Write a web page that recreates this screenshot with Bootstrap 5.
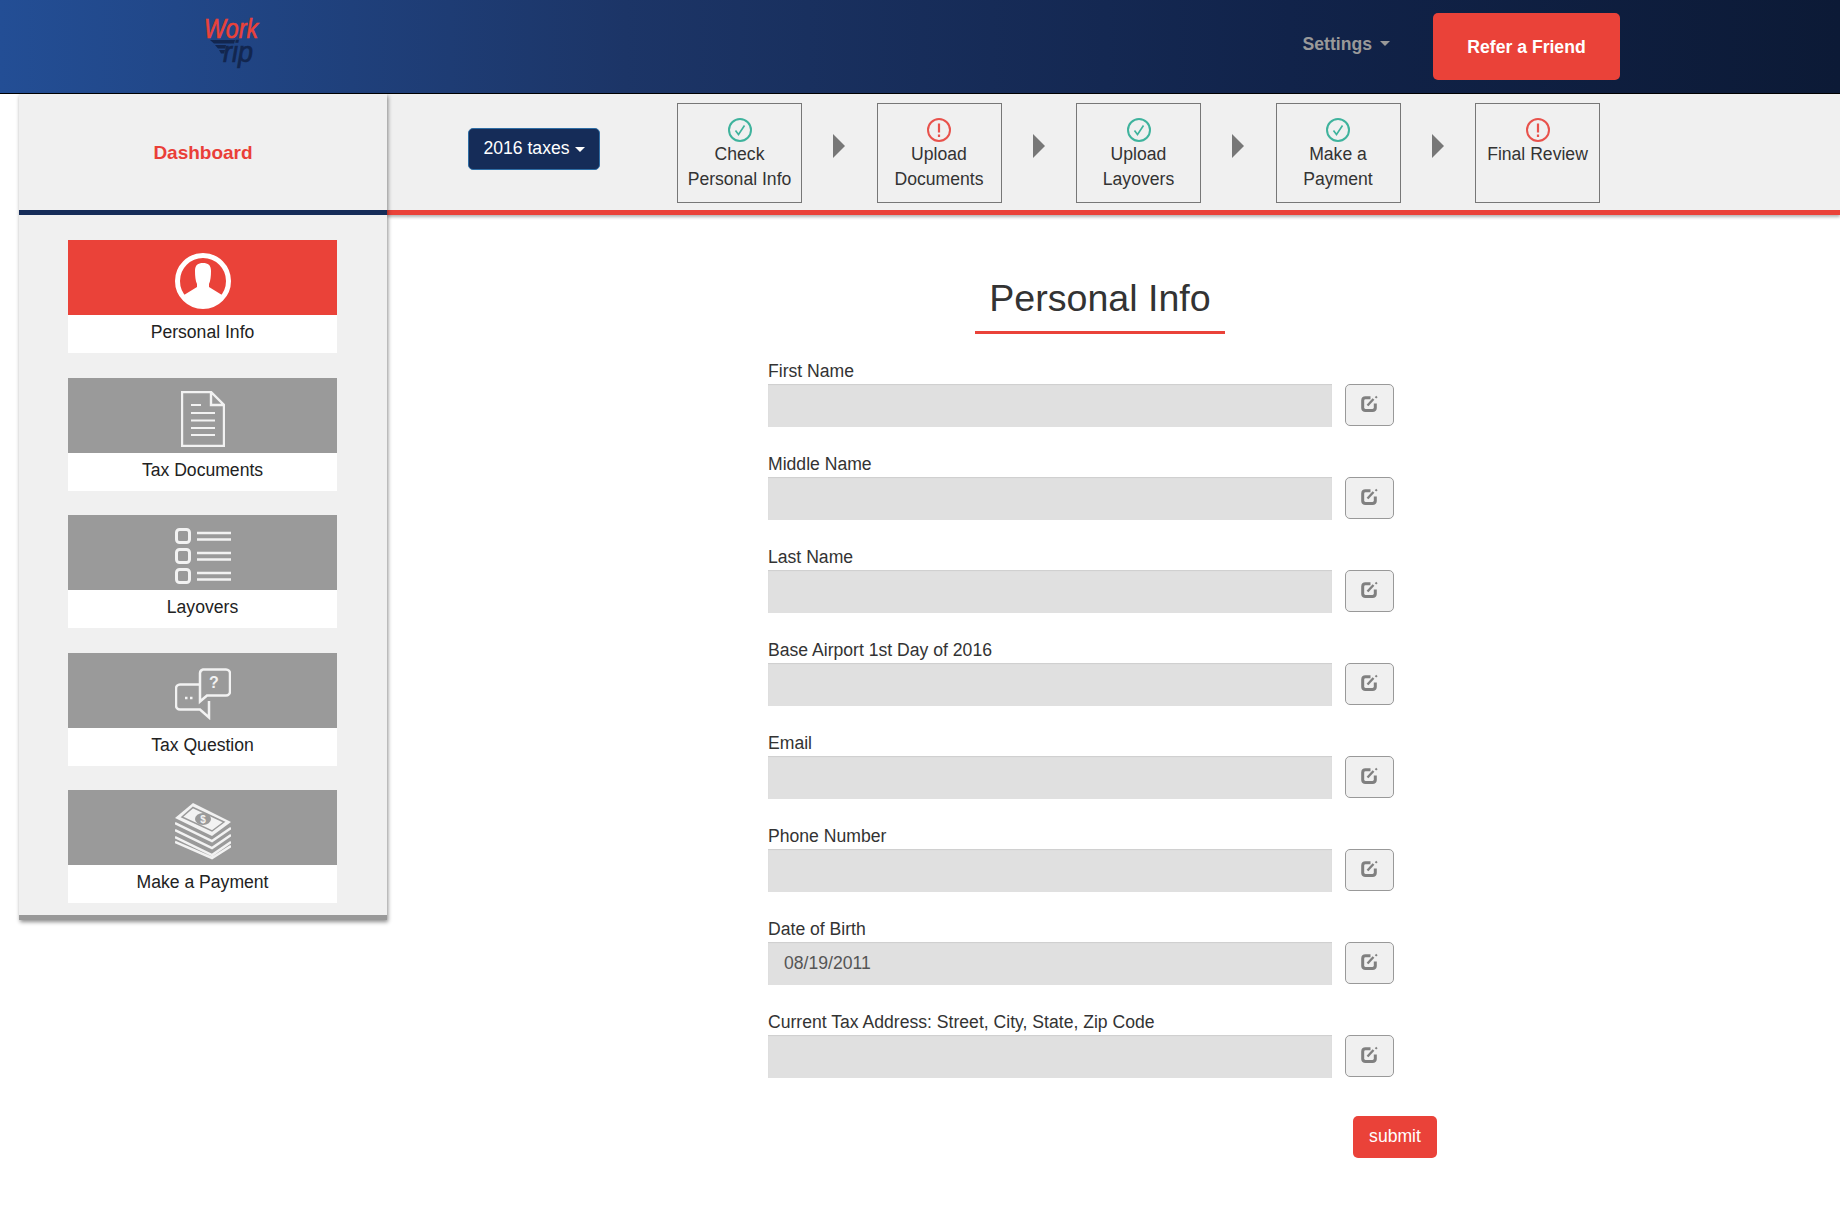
<!DOCTYPE html>
<html lang="en">
<head>
  <meta charset="UTF-8">
  <title>Work Trip - Personal Info</title>
  <link href="https://cdn.jsdelivr.net/npm/bootstrap@5.3.2/dist/css/bootstrap.min.css" rel="stylesheet">
  <style>
    body { font-family: "Liberation Sans", Arial, sans-serif; font-size: 17.6px; line-height: 25px; color: #333; background: #fff; }
    .top-bar { height: 94px; padding: 0; border-bottom: 1px solid #000; background: linear-gradient(90deg, #234e95 0%, #1c3567 34%, #11234a 70%, #0c1a36 100%); }
    .logo-wrap { margin-left: 204px; margin-top: -5px; }
    .logo-wrap svg { overflow: visible; }
    .settings-link { color: #999; font-weight: 700; font-size: 17.6px; padding: 0; margin-right: 43px; margin-top: -4px; }
    .settings-link:hover { color: #999; }
    .settings-link::after { margin-left: 8px; }
    .refer-btn { width: 187px; height: 67px; margin-right: 220px; background: #ea4239; border: 0; border-radius: 5px; color: #fff; font-weight: 700; font-size: 17.6px; padding-top: 8px; }
    .side-panel { width: 368px; margin-left: 19px; flex: none; background: #f0f0f0; border-bottom: 5px solid #999; box-shadow: 1px 2px 4px rgba(0,0,0,.45); position: relative; z-index: 2; height: 826px; }
    .side-head { height: 121px; border-bottom: 5px solid #152c58; color: #ea3f38; font-weight: 700; font-size: 19px; }
    .side-items { padding: 25px 50px 0 49px; }
    .side-item { display: block; height: 113px; margin-bottom: 24.5px; background: #fff; color: #222; text-align: center; text-decoration: none; }
    .side-icon { height: 75px; padding-top: 7px; background: #9a9a9a; }
    .side-item.is-active .side-icon { background: #ea4239; }
    .side-label { height: 38px; line-height: 34px; }
    .step-bar { height: 121px; background: #f0f0f0; border-bottom: 5px solid #ea4239; padding: 9px 0 0 81px; box-shadow: 0 2px 3px rgba(0,0,0,.3); }
    .year-btn { width: 132px; height: 42px; margin-top: 25px; margin-right: 77px; padding: 5px 0 7px; background: #152c58; border: 1px solid #2e6da4; border-radius: 5px; color: #fff; font-size: 17.6px; line-height: 25px; }
    .year-btn:hover { background: #152c58; color: #fff; }
    .year-btn::after { vertical-align: .1em; margin-left: 5px; }
    .step-box { width: 125px; height: 100px; border: 1px solid #777; padding-top: 13px; text-align: center; color: #333; line-height: 25px; }
    .step-box svg { display: block; margin: 1px auto 0; }
    .step-arrow { width: 0; height: 0; margin: 31px 31.5px 0 31px; border-left: 12px solid #777; border-top: 12px solid transparent; border-bottom: 12px solid transparent; }
    .form-area { width: 669px; margin-left: 381px; padding-top: 61px; }
    .page-title { width: 250px; margin: 0 0 25px 207px; padding-bottom: 10px; border-bottom: 3px solid #ea4239; font-size: 37.6px; line-height: 45px; color: #333; font-weight: 400; white-space: nowrap; display: flex; justify-content: center; }
    .field-row { margin-bottom: 25px; }
    .field-label { display: block; height: 25px; margin: 0; color: #333; }
    .field-input { width: 564px; height: 43px; flex: none; padding: 0 16px; background: #e0e0e0; border: 0; border-radius: 0; box-shadow: inset 0 1px 1px rgba(0,0,0,.08); color: #555; font-size: 17.6px; }
    .field-input:focus { background: #e0e0e0; color: #555; }
    .edit-btn { width: 49px; height: 42px; margin-left: 13px; padding: 0 0 5px; background: #f0f0f0; border: 1px solid #999; border-radius: 5px; }
    .submit-btn { width: 84px; height: 42px; margin-top: 13px; padding: 0 0 2px; background: #ea4239; border: 0; border-radius: 5px; color: #fff; font-size: 17.6px; }
    .submit-btn:hover, .refer-btn:hover { background: #ea4239; color: #fff; }
  </style>
</head>
<body>
  <svg width="0" height="0" class="position-absolute">
    <symbol id="ok" viewBox="0 0 24 24"><circle cx="12" cy="12" r="11" fill="none" stroke="#3fb39d" stroke-width="2"/><path d="M7.5 12.5l3 4 6-9" fill="none" stroke="#3fb39d" stroke-width="1.6"/></symbol>
    <symbol id="warn" viewBox="0 0 24 24"><circle cx="12" cy="12" r="11" fill="none" stroke="#e8524c" stroke-width="2"/><path d="M12 5.5v9M12 16.5v2.5" fill="none" stroke="#e8524c" stroke-width="2.2"/></symbol>
    <symbol id="edit" viewBox="0 0 17 17"><path d="M9.5 2.800H4.500A2.800 2.800 0 0 0 1.700 5.500v7.500a2.800 2.800 0 0 0 2.800 2.500h7a2.800 2.800 0 0 0 2.800-2.500V8.500" fill="none" stroke="#808080" stroke-width="3"/><path d="M6.500 10.500L12.500 4" fill="none" stroke="#808080" stroke-width="2.400"/><path d="M14.500 1.500l1.400 1.400" fill="none" stroke="#808080" stroke-width="2"/></symbol>
  </svg>

  <nav class="navbar top-bar d-flex align-items-center justify-content-between flex-nowrap">
    <a class="logo-wrap d-block text-decoration-none" href="#">
      <svg width="56" height="54" viewBox="0 0 56 54" class="d-block">
        <text x="0" y="21" textLength="54" lengthAdjust="spacingAndGlyphs" font-family="Liberation Sans" font-style="italic" font-size="28" fill="#ea4239" stroke="#ea4239" stroke-width=".6">Work</text>
        <path d="M6 23h25l-1 3.500H10zM11 28h11l-1 3.500H14zM15 33h6l-1 3.500h-3z" fill="#12264f"/>
        <text x="19" y="45" textLength="30" lengthAdjust="spacingAndGlyphs" font-family="Liberation Sans" font-style="italic" font-size="29" fill="#12264f" stroke="#12264f" stroke-width=".7">rip</text>
      </svg>
    </a>
    <div class="d-flex align-items-center">
      <a class="settings-link dropdown-toggle text-decoration-none" href="#">Settings</a>
      <button class="btn refer-btn" type="button">Refer a Friend</button>
    </div>
  </nav>

  <div class="d-flex align-items-start">
    <aside class="side-panel">
      <div class="side-head d-flex align-items-center justify-content-center">Dashboard</div>
      <div class="side-items">
        <a class="side-item is-active" href="#">
          <div class="side-icon d-flex align-items-center justify-content-center">
            <svg width="56" height="56" viewBox="0 0 56 56">
              <circle cx="28" cy="28" r="25.500" fill="none" stroke="#fff" stroke-width="5"/>
              <path d="M20 18c0-6 3-8 8-8s8 2 8 8c0 5-.5 10-2 13v3l13 8C42 49 35 53 28 53S14 49 9 42l13-8v-3c-1.500-3-2-8-2-13z" fill="#fff"/>
            </svg>
          </div>
          <div class="side-label">Personal Info</div>
        </a>
        <a class="side-item" href="#">
          <div class="side-icon d-flex align-items-center justify-content-center">
            <svg width="44" height="56" viewBox="0 0 44 56" fill="none" stroke="#f2f2f2" stroke-width="2">
              <path d="M1 1h29l13 13v41H1zM30 1v13h13" stroke-width="2.400"/>
              <path d="M10 14h10M10 22h24M10 29.500h24M10 37h24M10 44h24"/>
            </svg>
          </div>
          <div class="side-label">Tax Documents</div>
        </a>
        <a class="side-item" href="#">
          <div class="side-icon d-flex align-items-center justify-content-center">
            <svg width="56" height="56" viewBox="0 0 56 56" fill="none" stroke="#f2f2f2" stroke-width="2.400">
              <rect x="1.500" y="1.500" width="13" height="13" rx="3" stroke-width="3"/>
              <rect x="1.500" y="21.500" width="13" height="13" rx="3" stroke-width="3"/>
              <rect x="1.500" y="41.500" width="13" height="13" rx="3" stroke-width="3"/>
              <path d="M22 5h34M22 11.500h34M22 25h34M22 31.500h34M22 45h34M22 51.500h34"/>
            </svg>
          </div>
          <div class="side-label">Layovers</div>
        </a>
        <a class="side-item" href="#">
          <div class="side-icon d-flex align-items-center justify-content-center">
            <svg width="56" height="52" viewBox="0 0 56 52" fill="none" stroke="#f2f2f2" stroke-width="2.500">
              <path d="M28 1.500h23a4 4 0 0 1 4 4v18a4 4 0 0 1-4 4H32l-7 6V5.500a4 4 0 0 1 3-4z"/>
              <path d="M24 16.500H5a4 4 0 0 0-4 4v17a4 4 0 0 0 4 4h20l9 8V33"/>
              <text x="39" y="20" text-anchor="middle" font-family="Liberation Sans" font-weight="700" font-size="16" fill="#f2f2f2" stroke="none">?</text>
              <path d="M10 30h2.500M15 30h2.500" stroke-width="2.500"/>
            </svg>
          </div>
          <div class="side-label">Tax Question</div>
        </a>
        <a class="side-item" href="#">
          <div class="side-icon d-flex align-items-center justify-content-center">
            <svg width="56" height="57" viewBox="0 0 56 57" fill="none" stroke="#f2f2f2" stroke-width="2.500">
              <path d="M18 0L56 19 37 33 0 15z" fill="#f2f2f2" stroke="none"/>
              <path d="M18 4.500L49 19 37 28 7 14z" stroke="#9a9a9a" stroke-width="1.500"/>
              <ellipse cx="28" cy="16" rx="8" ry="6" fill="#9a9a9a" stroke="none"/>
              <text x="28" y="20" text-anchor="middle" font-family="Liberation Sans" font-weight="700" font-size="10" fill="#f2f2f2" stroke="none">$</text>
              <path d="M0 20l37 18 19-13M0 27l37 18 19-13M0 34l37 18 19-13M0 39l37 16 19-12"/>
            </svg>
          </div>
          <div class="side-label">Make a Payment</div>
        </a>
      </div>
    </aside>

    <main class="flex-grow-1">
      <div class="step-bar d-flex align-items-start">
        <button class="btn year-btn dropdown-toggle" type="button">2016 taxes</button>
        <div class="step-box"><svg width="24" height="24"><use href="#ok"/></svg>Check<br>Personal Info</div>
        <div class="step-arrow"></div>
        <div class="step-box"><svg width="24" height="24"><use href="#warn"/></svg>Upload<br>Documents</div>
        <div class="step-arrow"></div>
        <div class="step-box"><svg width="24" height="24"><use href="#ok"/></svg>Upload<br>Layovers</div>
        <div class="step-arrow"></div>
        <div class="step-box"><svg width="24" height="24"><use href="#ok"/></svg>Make a<br>Payment</div>
        <div class="step-arrow"></div>
        <div class="step-box"><svg width="24" height="24"><use href="#warn"/></svg>Final Review</div>
      </div>

      <form class="form-area">
        <h1 class="page-title">Personal Info</h1>
        <div class="field-row"><label class="field-label">First Name</label><div class="d-flex align-items-start"><input class="form-control field-input" type="text" readonly><button class="btn edit-btn" type="button"><svg width="17" height="17"><use href="#edit"/></svg></button></div></div>
        <div class="field-row"><label class="field-label">Middle Name</label><div class="d-flex align-items-start"><input class="form-control field-input" type="text" readonly><button class="btn edit-btn" type="button"><svg width="17" height="17"><use href="#edit"/></svg></button></div></div>
        <div class="field-row"><label class="field-label">Last Name</label><div class="d-flex align-items-start"><input class="form-control field-input" type="text" readonly><button class="btn edit-btn" type="button"><svg width="17" height="17"><use href="#edit"/></svg></button></div></div>
        <div class="field-row"><label class="field-label">Base Airport 1st Day of 2016</label><div class="d-flex align-items-start"><input class="form-control field-input" type="text" readonly><button class="btn edit-btn" type="button"><svg width="17" height="17"><use href="#edit"/></svg></button></div></div>
        <div class="field-row"><label class="field-label">Email</label><div class="d-flex align-items-start"><input class="form-control field-input" type="text" readonly><button class="btn edit-btn" type="button"><svg width="17" height="17"><use href="#edit"/></svg></button></div></div>
        <div class="field-row"><label class="field-label">Phone Number</label><div class="d-flex align-items-start"><input class="form-control field-input" type="text" readonly><button class="btn edit-btn" type="button"><svg width="17" height="17"><use href="#edit"/></svg></button></div></div>
        <div class="field-row"><label class="field-label">Date of Birth</label><div class="d-flex align-items-start"><input class="form-control field-input" type="text" value="08/19/2011" readonly><button class="btn edit-btn" type="button"><svg width="17" height="17"><use href="#edit"/></svg></button></div></div>
        <div class="field-row"><label class="field-label">Current Tax Address: Street, City, State, Zip Code</label><div class="d-flex align-items-start"><input class="form-control field-input" type="text" readonly><button class="btn edit-btn" type="button"><svg width="17" height="17"><use href="#edit"/></svg></button></div></div>
        <div class="d-flex justify-content-end"><button class="btn submit-btn" type="button">submit</button></div>
      </form>
    </main>
  </div>

  <script src="https://cdn.jsdelivr.net/npm/bootstrap@5.3.2/dist/js/bootstrap.bundle.min.js"></script>
</body>
</html>
